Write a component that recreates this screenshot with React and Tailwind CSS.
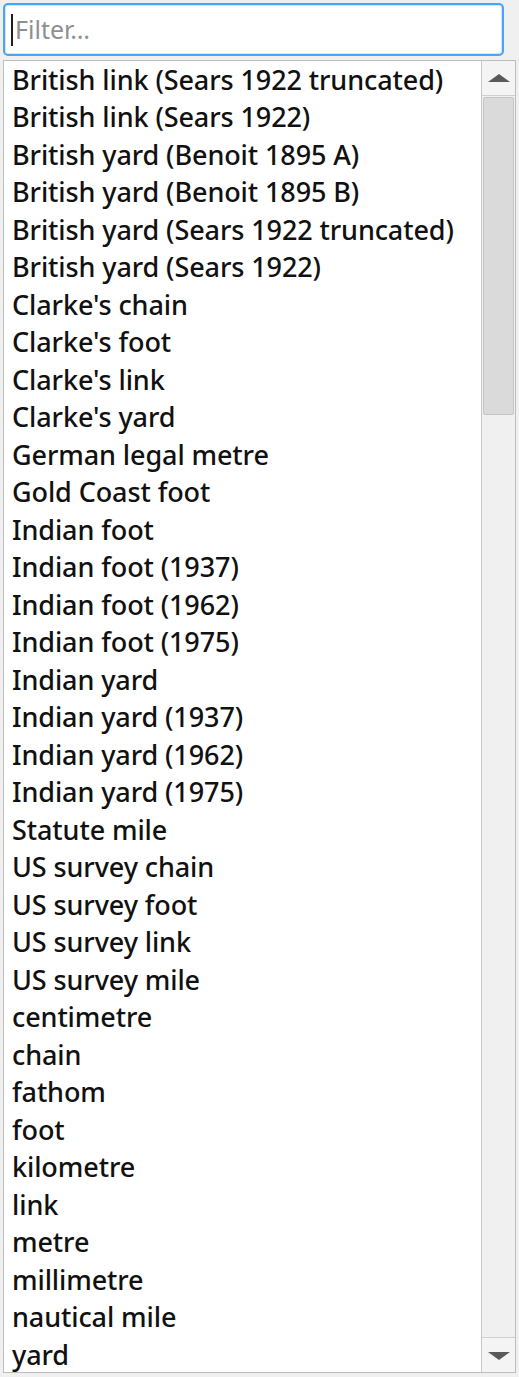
import React from "react";

const items = [
  "British link (Sears 1922 truncated)",
  "British link (Sears 1922)",
  "British yard (Benoit 1895 A)",
  "British yard (Benoit 1895 B)",
  "British yard (Sears 1922 truncated)",
  "British yard (Sears 1922)",
  "Clarke's chain",
  "Clarke's foot",
  "Clarke's link",
  "Clarke's yard",
  "German legal metre",
  "Gold Coast foot",
  "Indian foot",
  "Indian foot (1937)",
  "Indian foot (1962)",
  "Indian foot (1975)",
  "Indian yard",
  "Indian yard (1937)",
  "Indian yard (1962)",
  "Indian yard (1975)",
  "Statute mile",
  "US survey chain",
  "US survey foot",
  "US survey link",
  "US survey mile",
  "centimetre",
  "chain",
  "fathom",
  "foot",
  "kilometre",
  "link",
  "metre",
  "millimetre",
  "nautical mile",
  "yard",
];

export default function App() {
  return (
    <div
      className="w-[519px] h-[1377px] bg-[#f0f0f0] flex flex-col pt-[3px] pl-[3px] overflow-hidden"
      style={{ fontFamily: '"Noto Sans", "Open Sans", sans-serif' }}
    >
      <div className="w-[501px] h-[53px] rounded-[5px] border-2 border-[#4aa3f3] bg-white flex items-center pl-[6px] shadow-[inset_0_0_0_1px_#cfe6fb]">
        <div className="w-[2px] h-[32px] bg-[#202020] mr-[2px]" />
        <span className="text-[25px] text-[#8f8f8f] leading-none">Filter…</span>
      </div>
      <div className="mt-[4px] w-[513px] h-[1313px] border border-[#bdbdbd] bg-white flex">
        <div className="flex-1 flex flex-col">
          {items.map((t) => (
            <div
              key={t}
              className="h-[37.5px] flex items-center pl-[8px] text-[27px] font-medium text-[#111] whitespace-nowrap tracking-[-0.1px]"
            >
              {t}
            </div>
          ))}
        </div>
        <div className="w-[34px] border-l border-[#c8c8c8] bg-[#f0f0f0] flex flex-col">
          <div className="h-[35px] bg-[#f4f4f4] border-b border-[#d0d0d0] flex items-center justify-center">
            <svg width="22" height="9" viewBox="0 0 22 9">
              <polygon points="11,0 22,8 0,8" fill="#5a5a5a" />
            </svg>
          </div>
          <div className="h-[318px] mx-[1px] mt-[1px] bg-[#dadada] border border-[#c4c4c4] rounded-[2px]" />
          <div className="flex-1" />
          <div className="h-[35px] bg-[#f4f4f4] border-t border-[#d0d0d0] flex items-center justify-center">
            <svg width="22" height="9" viewBox="0 0 22 9">
              <polygon points="0,1 22,1 11,9" fill="#5a5a5a" />
            </svg>
          </div>
        </div>
      </div>
    </div>
  );
}
